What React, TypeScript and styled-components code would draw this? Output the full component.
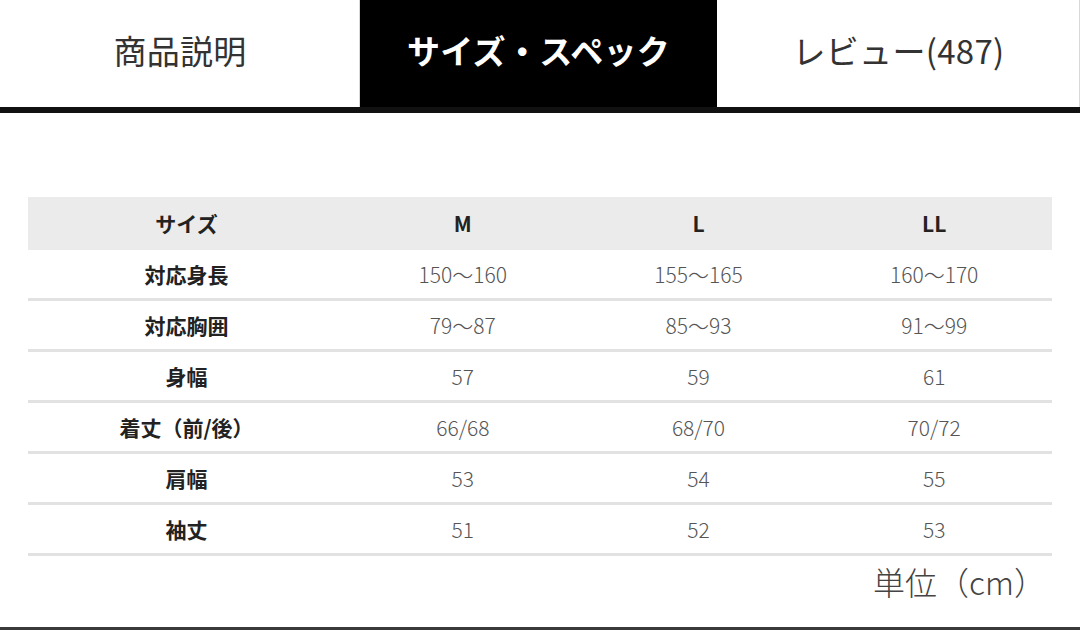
import * as React from 'react';
import styled, {createGlobalStyle} from 'styled-components';

const GlobalStyle = createGlobalStyle`
  html, body {
    margin: 0;
    padding: 0;
    background: #fff;
  }
  body {
    font-family: "Noto Sans CJK JP", "Noto Sans", sans-serif;
    color: #222;
  }
`;

const Page = styled.div`
  width: 1080px;
  height: 630px;
  display: flex;
  flex-direction: column;
  overflow: hidden;
`;

const TabBar = styled.div`
  display: flex;
  height: 107px;
  border-bottom: 6px solid #111;
`;

const Tab = styled.div<{ $active?: boolean; $width: number }>`
  width: ${(p) => p.$width}px;
  display: flex;
  align-items: center;
  justify-content: center;
  padding-bottom: 7px;
  box-sizing: border-box;
  font-size: 33px;
  letter-spacing: 0.3px;
  font-weight: ${(p) => (p.$active ? 700 : 400)};
  color: ${(p) => (p.$active ? '#fff' : '#333')};
  background: ${(p) => (p.$active ? '#000' : '#fff')};
  box-shadow: ${(p) => (p.$active ? 'none' : 'inset -1px 0 0 #d8d8d8')};
`;

const TableWrap = styled.div`
  margin: 84px 28px 0;
`;

const Table = styled.table`
  width: 1024px;
  border-collapse: collapse;
  table-layout: fixed;
`;

const HeadRow = styled.tr`
  background: #ebebeb;
`;

const Row = styled.tr`
  border-bottom: 3px solid #e2e2e2;
`;

const Cell = styled.td<{ $strong?: boolean; $tall?: boolean }>`
  height: ${(p) => (p.$tall ? 53 : 48)}px;
  padding: 0;
  text-align: center;
  vertical-align: middle;
  line-height: 1;
  font-size: 21px;
  font-weight: ${(p) => (p.$strong ? 700 : 300)};
  color: ${(p) => (p.$strong ? '#222' : '#555')};
`;

const Note = styled.div`
  margin-top: 8px;
  padding-right: 34px;
  text-align: right;
  font-size: 32px;
  line-height: 34px;
  font-weight: 300;
  color: #444;
`;

const BottomRule = styled.div`
  margin-top: auto;
  height: 3px;
  background: #3a3a3a;
`;

const sizes = ['M', 'L', 'LL'];

const rows: [string, string[]][] = [
  ['対応身長', ['150〜160', '155〜165', '160〜170']],
  ['対応胸囲', ['79〜87', '85〜93', '91〜99']],
  ['身幅', ['57', '59', '61']],
  ['着丈（前/後）', ['66/68', '68/70', '70/72']],
  ['肩幅', ['53', '54', '55']],
  ['袖丈', ['51', '52', '53']],
];

export default function App() {
  return (
    <Page>
      <GlobalStyle/>
      <TabBar>
        <Tab $width={360}>商品説明</Tab>
        <Tab $width={357} $active>サイズ・スペック</Tab>
        <Tab $width={363}>レビュー(487)</Tab>
      </TabBar>
      <TableWrap>
        <Table>
          <colgroup>
            <col style={{width: 317}}/>
            <col/>
            <col/>
            <col/>
          </colgroup>
          <tbody>
            <HeadRow>
              <Cell $strong $tall>サイズ</Cell>
              {sizes.map((s) => <Cell $strong $tall key={s}>{s}</Cell>)}
            </HeadRow>
            {rows.map(([label, values]) => (
              <Row key={label}>
                <Cell $strong>{label}</Cell>
                {values.map((v, i) => <Cell key={i}>{v}</Cell>)}
              </Row>
            ))}
          </tbody>
        </Table>
      </TableWrap>
      <Note>単位（cm）</Note>
      <BottomRule/>
    </Page>
  );
}
